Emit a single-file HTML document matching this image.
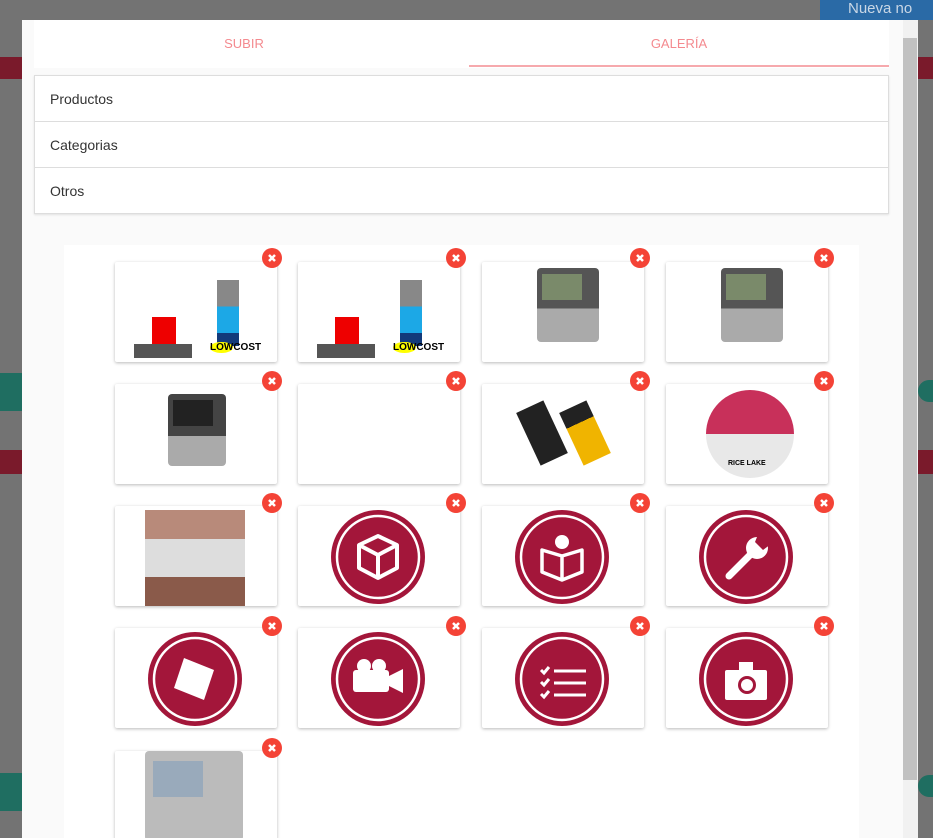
<!DOCTYPE html>
<html><head><meta charset="utf-8"><style>
*{box-sizing:border-box;margin:0;padding:0}
html,body{width:933px;height:838px;overflow:hidden}
body{background:#737373;font-family:"Liberation Sans",sans-serif;position:relative}
.abs{position:absolute}
.modal{left:22px;top:20px;width:896px;height:818px;background:#fafafa}
.tabs{left:34px;top:20px;width:855px;height:48px;background:#fff}
.tab{position:absolute;top:16px;font-size:13px;color:#f48a8f;width:420px;text-align:center}
.acc{left:34px;top:75px;width:855px;height:139px;border:1px solid #ddd;background:#fff;box-shadow:0 1px 2px rgba(0,0,0,.1)}
.acc div{height:46px;border-bottom:1px solid #ddd;padding:15px 0 0 15px;font-size:14px;color:#333}
.acc div:last-child{border-bottom:none}
.panel{left:64px;top:245px;width:795px;height:593px;background:#fff}
.card{position:absolute;width:162px;height:100px;background:#fff;box-shadow:0 1px 3px rgba(0,0,0,.28);border-radius:2px;overflow:hidden}
.x{position:absolute;width:20px;height:20px;border-radius:50%;background:#f44336}
.x svg{position:absolute;left:5px;top:5px}
.ic{position:absolute;left:33px;top:4px;width:94px;height:94px}
</style></head><body>
<div class="abs" style="left:820px;top:0;width:113px;height:20px;background:#2a6aa6;color:#c9d7e6;font-size:15px;padding-left:28px">Nueva no</div>
<div class="abs" style="left:0;top:57px;width:22px;height:22px;background:#7a1a2b"></div>
<div class="abs" style="left:918px;top:57px;width:15px;height:22px;background:#7a1a2b"></div>
<div class="abs" style="left:0;top:450px;width:22px;height:24px;background:#7a1a2b"></div>
<div class="abs" style="left:918px;top:450px;width:15px;height:24px;background:#7a1a2b"></div>
<div class="abs" style="left:0;top:373px;width:22px;height:38px;background:#1f6e61"></div>
<div class="abs" style="left:0;top:773px;width:22px;height:38px;background:#1f6e61"></div>
<div class="abs" style="left:918px;top:380px;width:15px;height:22px;background:#1f6e61;border-radius:11px 0 0 11px"></div>
<div class="abs" style="left:918px;top:775px;width:15px;height:22px;background:#1f6e61;border-radius:11px 0 0 11px"></div>
<div class="abs modal"></div>
<div class="abs" style="left:903px;top:20px;width:15px;height:818px;background:#f1f1f1"></div>
<div class="abs" style="left:903px;top:38px;width:14px;height:742px;background:#c1c1c1"></div>
<div class="abs tabs">
<div class="tab" style="left:0">SUBIR</div>
<div class="tab" style="left:435px">GALERÍA</div>
<div class="abs" style="left:435px;top:45px;width:420px;height:2px;background:#f6a9ad"></div>
</div>
<div class="abs acc"><div>Productos</div><div>Categorias</div><div>Otros</div></div>
<div class="abs panel"></div>

<svg width="0" height="0" style="position:absolute">
<defs>
<g id="c"><circle cx="47" cy="47" r="47" fill="#a3163a"/><circle cx="47" cy="47" r="41" fill="none" stroke="#fff" stroke-width="2.5"/></g>
</defs></svg>

<!-- row 1 -->
<div class="card" style="left:115px;top:262px"><div class="abs" style="left:37px;top:55px;width:24px;height:30px;background:#e00"></div><div class="abs" style="left:102px;top:18px;width:22px;height:66px;background:linear-gradient(#888 0 40%,#1ca8e6 40% 80%,#123a7a 80%)"></div><div class="abs" style="left:19px;top:82px;width:58px;height:14px;background:#555"></div><div class="abs" style="left:95px;top:80px;font-size:10px;font-weight:bold"><span style="background:#ff0;border-radius:50%">LOW</span>COST</div></div>
<div class="card" style="left:298px;top:262px"><div class="abs" style="left:37px;top:55px;width:24px;height:30px;background:#e00"></div><div class="abs" style="left:102px;top:18px;width:22px;height:66px;background:linear-gradient(#888 0 40%,#1ca8e6 40% 80%,#123a7a 80%)"></div><div class="abs" style="left:19px;top:82px;width:58px;height:14px;background:#555"></div><div class="abs" style="left:95px;top:80px;font-size:10px;font-weight:bold"><span style="background:#ff0;border-radius:50%">LOW</span>COST</div></div>
<div class="card" style="left:482px;top:262px"><div class="abs" style="left:55px;top:6px;width:62px;height:74px;background:linear-gradient(#555 0 55%,#aaa 55%);border-radius:4px"></div><div class="abs" style="left:60px;top:12px;width:40px;height:26px;background:#7a8a6a"></div></div>
<div class="card" style="left:666px;top:262px"><div class="abs" style="left:55px;top:6px;width:62px;height:74px;background:linear-gradient(#555 0 55%,#aaa 55%);border-radius:4px"></div><div class="abs" style="left:60px;top:12px;width:40px;height:26px;background:#7a8a6a"></div></div>
<!-- row 2 -->
<div class="card" style="left:115px;top:384px"><div class="abs" style="left:53px;top:10px;width:58px;height:72px;background:linear-gradient(#444 0 58%,#aaa 58%);border-radius:4px"></div><div class="abs" style="left:58px;top:16px;width:40px;height:26px;background:#222"></div></div>
<div class="card" style="left:298px;top:384px"></div>
<div class="card" style="left:482px;top:384px"><div class="abs" style="left:45px;top:20px;width:30px;height:58px;background:#222;transform:rotate(-25deg)"></div><div class="abs" style="left:88px;top:20px;width:30px;height:58px;background:linear-gradient(#222 0 30%,#f0b400 30%);transform:rotate(-25deg)"></div></div>
<div class="card" style="left:666px;top:384px"><div class="abs" style="left:40px;top:6px;width:88px;height:88px;border-radius:50%;background:linear-gradient(#c8305a 0 50%,#e8e8e8 50%)"></div><div class="abs" style="left:62px;top:76px;font-size:7px;font-weight:bold">RICE LAKE</div></div>
<!-- row 3 -->
<div class="card" style="left:115px;top:506px"><div class="abs" style="left:30px;top:4px;width:100px;height:96px;background:linear-gradient(#b88a7a 0 30%,#ddd 30% 70%,#8a5a4a 70%)"></div></div>
<div class="card" style="left:298px;top:506px"><svg class="ic" viewBox="0 0 94 94"><use href="#c"/><path d="M47 26L66 35V58L47 68L28 58V35Z M28 35L47 45L66 35 M47 45V68" fill="none" stroke="#fff" stroke-width="4" stroke-linejoin="round"/></svg></div>
<div class="card" style="left:482px;top:506px"><svg class="ic" viewBox="0 0 94 94"><use href="#c"/><circle cx="47" cy="32" r="7" fill="#fff"/><path d="M27 40L47 46L67 40V62L47 70L27 62Z M47 46V70" fill="none" stroke="#fff" stroke-width="3.5" stroke-linejoin="round"/></svg></div>
<div class="card" style="left:666px;top:506px"><svg class="ic" viewBox="0 0 94 94"><use href="#c"/><path d="M30 66L52 44" stroke="#fff" stroke-width="7" stroke-linecap="round"/><circle cx="58" cy="38" r="11" fill="#fff"/><path d="M60 22L72 34L64 40L56 32Z" fill="#a3163a"/></svg></div>
<!-- row 4 -->
<div class="card" style="left:115px;top:628px"><svg class="ic" viewBox="0 0 94 94"><use href="#c"/><path d="M36 26L66 38L56 68L26 56Z" fill="#fff"/></svg></div>
<div class="card" style="left:298px;top:628px"><svg class="ic" viewBox="0 0 94 94"><use href="#c"/><rect x="22" y="38" width="36" height="22" rx="3" fill="#fff"/><circle cx="33" cy="34" r="7" fill="#fff"/><circle cx="48" cy="34" r="7" fill="#fff"/><path d="M58 44L72 37V61L58 54Z" fill="#fff"/></svg></div>
<div class="card" style="left:482px;top:628px"><svg class="ic" viewBox="0 0 94 94"><use href="#c"/><path d="M26 38l3 3 5-6M26 50l3 3 5-6M26 62l3 3 5-6M39 39H71M39 51H71M39 63H71" fill="none" stroke="#fff" stroke-width="3"/></svg></div>
<div class="card" style="left:666px;top:628px"><svg class="ic" viewBox="0 0 94 94"><use href="#c"/><rect x="26" y="38" width="42" height="30" rx="2" fill="#fff"/><rect x="40" y="30" width="14" height="8" fill="#fff"/><circle cx="48" cy="53" r="9" fill="#a3163a"/><circle cx="48" cy="53" r="6" fill="#fff"/></svg></div>
<!-- row 5 -->
<div class="card" style="left:115px;top:751px;height:90px"><div class="abs" style="left:30px;top:0;width:98px;height:90px;background:#bbb;border-radius:4px"></div><div class="abs" style="left:38px;top:10px;width:50px;height:36px;background:#9ab"></div></div>

<div id="xs"></div>
<div class="x" style="left:262px;top:248px"><svg width="10" height="10"><path d="M2 2L8 8M8 2L2 8" stroke="#fff" stroke-width="2.5"/></svg></div>
<div class="x" style="left:446px;top:248px"><svg width="10" height="10"><path d="M2 2L8 8M8 2L2 8" stroke="#fff" stroke-width="2.5"/></svg></div>
<div class="x" style="left:630px;top:248px"><svg width="10" height="10"><path d="M2 2L8 8M8 2L2 8" stroke="#fff" stroke-width="2.5"/></svg></div>
<div class="x" style="left:814px;top:248px"><svg width="10" height="10"><path d="M2 2L8 8M8 2L2 8" stroke="#fff" stroke-width="2.5"/></svg></div>
<div class="x" style="left:262px;top:371px"><svg width="10" height="10"><path d="M2 2L8 8M8 2L2 8" stroke="#fff" stroke-width="2.5"/></svg></div>
<div class="x" style="left:446px;top:371px"><svg width="10" height="10"><path d="M2 2L8 8M8 2L2 8" stroke="#fff" stroke-width="2.5"/></svg></div>
<div class="x" style="left:630px;top:371px"><svg width="10" height="10"><path d="M2 2L8 8M8 2L2 8" stroke="#fff" stroke-width="2.5"/></svg></div>
<div class="x" style="left:814px;top:371px"><svg width="10" height="10"><path d="M2 2L8 8M8 2L2 8" stroke="#fff" stroke-width="2.5"/></svg></div>
<div class="x" style="left:262px;top:493px"><svg width="10" height="10"><path d="M2 2L8 8M8 2L2 8" stroke="#fff" stroke-width="2.5"/></svg></div>
<div class="x" style="left:446px;top:493px"><svg width="10" height="10"><path d="M2 2L8 8M8 2L2 8" stroke="#fff" stroke-width="2.5"/></svg></div>
<div class="x" style="left:630px;top:493px"><svg width="10" height="10"><path d="M2 2L8 8M8 2L2 8" stroke="#fff" stroke-width="2.5"/></svg></div>
<div class="x" style="left:814px;top:493px"><svg width="10" height="10"><path d="M2 2L8 8M8 2L2 8" stroke="#fff" stroke-width="2.5"/></svg></div>
<div class="x" style="left:262px;top:616px"><svg width="10" height="10"><path d="M2 2L8 8M8 2L2 8" stroke="#fff" stroke-width="2.5"/></svg></div>
<div class="x" style="left:446px;top:616px"><svg width="10" height="10"><path d="M2 2L8 8M8 2L2 8" stroke="#fff" stroke-width="2.5"/></svg></div>
<div class="x" style="left:630px;top:616px"><svg width="10" height="10"><path d="M2 2L8 8M8 2L2 8" stroke="#fff" stroke-width="2.5"/></svg></div>
<div class="x" style="left:814px;top:616px"><svg width="10" height="10"><path d="M2 2L8 8M8 2L2 8" stroke="#fff" stroke-width="2.5"/></svg></div>
<div class="x" style="left:262px;top:738px"><svg width="10" height="10"><path d="M2 2L8 8M8 2L2 8" stroke="#fff" stroke-width="2.5"/></svg></div>
</body></html>
